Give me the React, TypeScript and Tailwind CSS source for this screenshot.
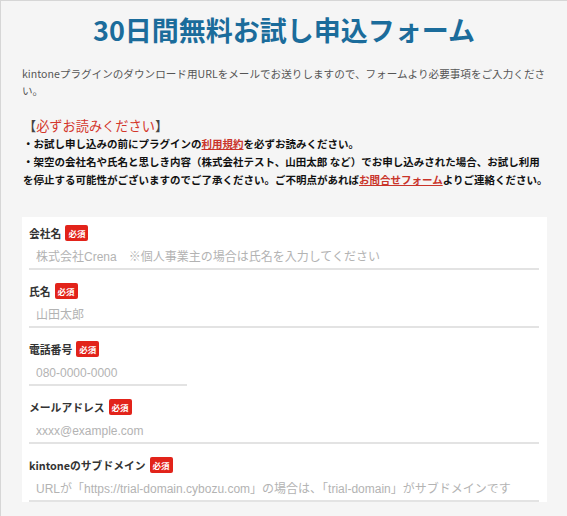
import React from 'react';

const jp = '"Noto Sans CJK JP", sans-serif';
const inputFont = '"Liberation Sans", "Noto Sans CJK JP", sans-serif';

interface FieldProps {
  label: string;
  placeholder: string;
  short?: boolean;
}

function Field({ label, placeholder, short }: FieldProps) {
  return (
    <div className="mb-[13px]">
      <div className="flex h-[16px] items-center gap-x-[4px]">
        <span className="text-[10.8px] font-bold text-[#333]">{label}</span>
        <span className="flex h-[16px] items-center rounded-[2px] bg-[#e2231a] px-[3px] text-[8.5px] font-bold text-white">
          必須
        </span>
      </div>
      <input
        type="text"
        placeholder={placeholder}
        className={
          short
            ? 'mt-[1px] block h-[28px] w-[158px] border-b-2 border-[#e3e3e3] bg-transparent pl-[7px] pt-[4px] text-[12px] outline-none placeholder:text-[#b3b3b3]'
            : 'mt-[1px] block h-[28px] w-full border-b-2 border-[#e3e3e3] bg-transparent pl-[7px] pt-[4px] text-[12px] outline-none placeholder:text-[#b3b3b3]'
        }
        style={{ fontFamily: inputFont }}
      />
    </div>
  );
}

export default function App() {
  return (
    <div
      className="h-[516px] w-[567px] overflow-hidden border-l border-t border-[#d6d6d6] bg-[#f5f5f5]"
      style={{ fontFamily: jp }}
    >
      {/* Title */}
      <h1 className="flex h-[59px] items-center justify-center text-[27px] font-bold text-[#1b6c9b]">
        30日間無料お試し申込フォーム
      </h1>

      {/* Intro */}
      <p className="mt-[5px] whitespace-nowrap pl-[21px] text-[10.6px] leading-[17px] text-[#555]">
        kintoneプラグインのダウンロード用URLをメールでお送りしますので、フォームより必要事項をご入力くださ
        <br />
        い。
      </p>

      {/* Notice */}
      <div className="mt-[17px] pl-[22px]">
        <p className="text-[13.2px] leading-[19px] text-[#d3352b]">
          <span className="text-[#444]">【</span>必ずお読みください<span className="text-[#444]">】</span>
        </p>
        <p className="whitespace-nowrap text-[10.5px] font-bold leading-[18px] text-[#111]">
          ・お試し申し込みの前にプラグインの
          <span className="text-[#c9342a] underline">利用規約</span>
          を必ずお読みください。
          <br />
          ・架空の会社名や氏名と思しき内容（株式会社テスト、山田太郎 など）でお申し込みされた場合、お試し利用
          <br />
          を停止する可能性がございますのでご了承ください。ご不明点があれば
          <span className="text-[#c9342a] underline">お問合せフォーム</span>
          よりご連絡ください。
        </p>
      </div>

      {/* Form card */}
      <div className="ml-[21px] mt-[28px] w-[525px] bg-white pl-[7px] pr-[8px] pt-[8px]">
        <Field label="会社名" placeholder="株式会社Crena　※個人事業主の場合は氏名を入力してください" />
        <Field label="氏名" placeholder="山田太郎" />
        <Field label="電話番号" placeholder="080-0000-0000" short />
        <Field label="メールアドレス" placeholder="xxxx@example.com" />
        <Field
          label="kintoneのサブドメイン"
          placeholder="URLが「https://trial-domain.cybozu.com」の場合は、「trial-domain」がサブドメインです"
        />
      </div>
    </div>
  );
}
